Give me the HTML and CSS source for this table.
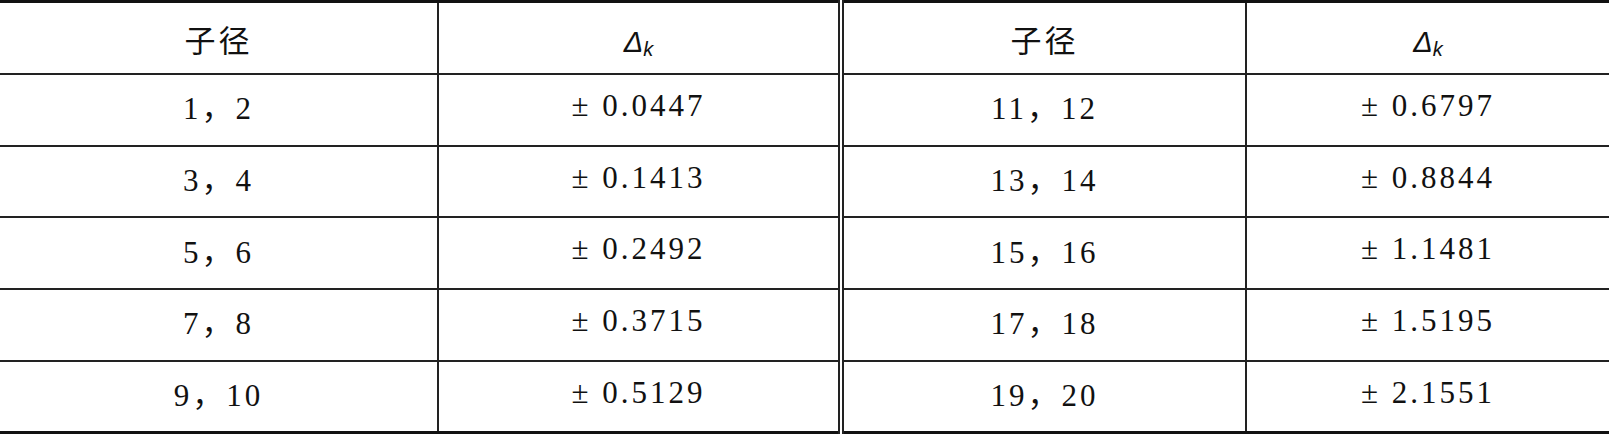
FILE: index.html
```html
<!DOCTYPE html>
<html lang="zh-CN">
<head>
    <meta charset="UTF-8">
    <meta name="viewport" content="width=device-width, initial-scale=1.0">
    <title>子径与 Δk</title>
    <link rel="stylesheet" href="styles.css">
</head>
<body>
    <table class="grid">
        <colgroup>
            <col class="col-a">
            <col class="col-b">
            <col class="col-c">
            <col class="col-d">
        </colgroup>
        <thead>
            <tr>
                <th class="cn">子径</th>
                <th class="split sym"><span class="delta">Δ</span><sub class="sub-k">k</sub></th>
                <th class="cn">子径</th>
                <th class="sym"><span class="delta">Δ</span><sub class="sub-k">k</sub></th>
            </tr>
        </thead>
        <tbody>
            <tr>
                <td>1，2</td>
                <td class="split">± 0.0447</td>
                <td>11，12</td>
                <td>± 0.6797</td>
            </tr>
            <tr>
                <td>3，4</td>
                <td class="split">± 0.1413</td>
                <td>13，14</td>
                <td>± 0.8844</td>
            </tr>
            <tr>
                <td>5，6</td>
                <td class="split">± 0.2492</td>
                <td>15，16</td>
                <td>± 1.1481</td>
            </tr>
            <tr>
                <td>7，8</td>
                <td class="split">± 0.3715</td>
                <td>17，18</td>
                <td>± 1.5195</td>
            </tr>
            <tr>
                <td>9，10</td>
                <td class="split">± 0.5129</td>
                <td>19，20</td>
                <td>± 2.1551</td>
            </tr>
        </tbody>
    </table>
</body>
</html>
```

FILE: styles.css
```css
body {
    margin: 0;
    padding: 0;
    background-color: #fff;
    color: #111;
    font-family: "Liberation Serif", "Noto Sans CJK SC", serif;
}

/* Tableau principal */
.grid {
    width: 1609px;
    border-collapse: collapse;
    table-layout: fixed;
    border-top: 3px solid #111;
    border-bottom: 3px solid #111;
}

.col-a { width: 438px; }
.col-b { width: 403px; }
.col-c { width: 405px; }
.col-d { width: 363px; }

.grid th,
.grid td {
    height: 70px;
    padding: 0;
    text-align: center;
    vertical-align: middle;
    border-top: 2px solid #222;
    border-left: 2px solid #222;
    font-size: 31px;
    font-weight: normal;
    letter-spacing: 3px;
}

.grid td {
    height: 61.7px;
    padding-bottom: 8px;
}

.grid tr > :first-child {
    border-left: none;
}

/* Double trait au milieu */
.grid .split {
    border-right: 6px double #222;
}

.grid thead th {
    border-top: 3px solid #111;
}

.cn {
    font-family: "Noto Sans CJK SC", sans-serif;
    letter-spacing: 8px;
    padding-left: 8px;
}

.grid .sym {
    height: 62px;
    padding-top: 8px;
}

.delta {
    font-family: "Liberation Sans", "DejaVu Sans", sans-serif;
    font-style: italic;
    font-size: 29px;
    letter-spacing: 0;
}

.sub-k {
    font-family: "Liberation Sans", "DejaVu Sans", sans-serif;
    font-style: italic;
    font-size: 20px;
    letter-spacing: 0;
    vertical-align: -4px;
}
```
